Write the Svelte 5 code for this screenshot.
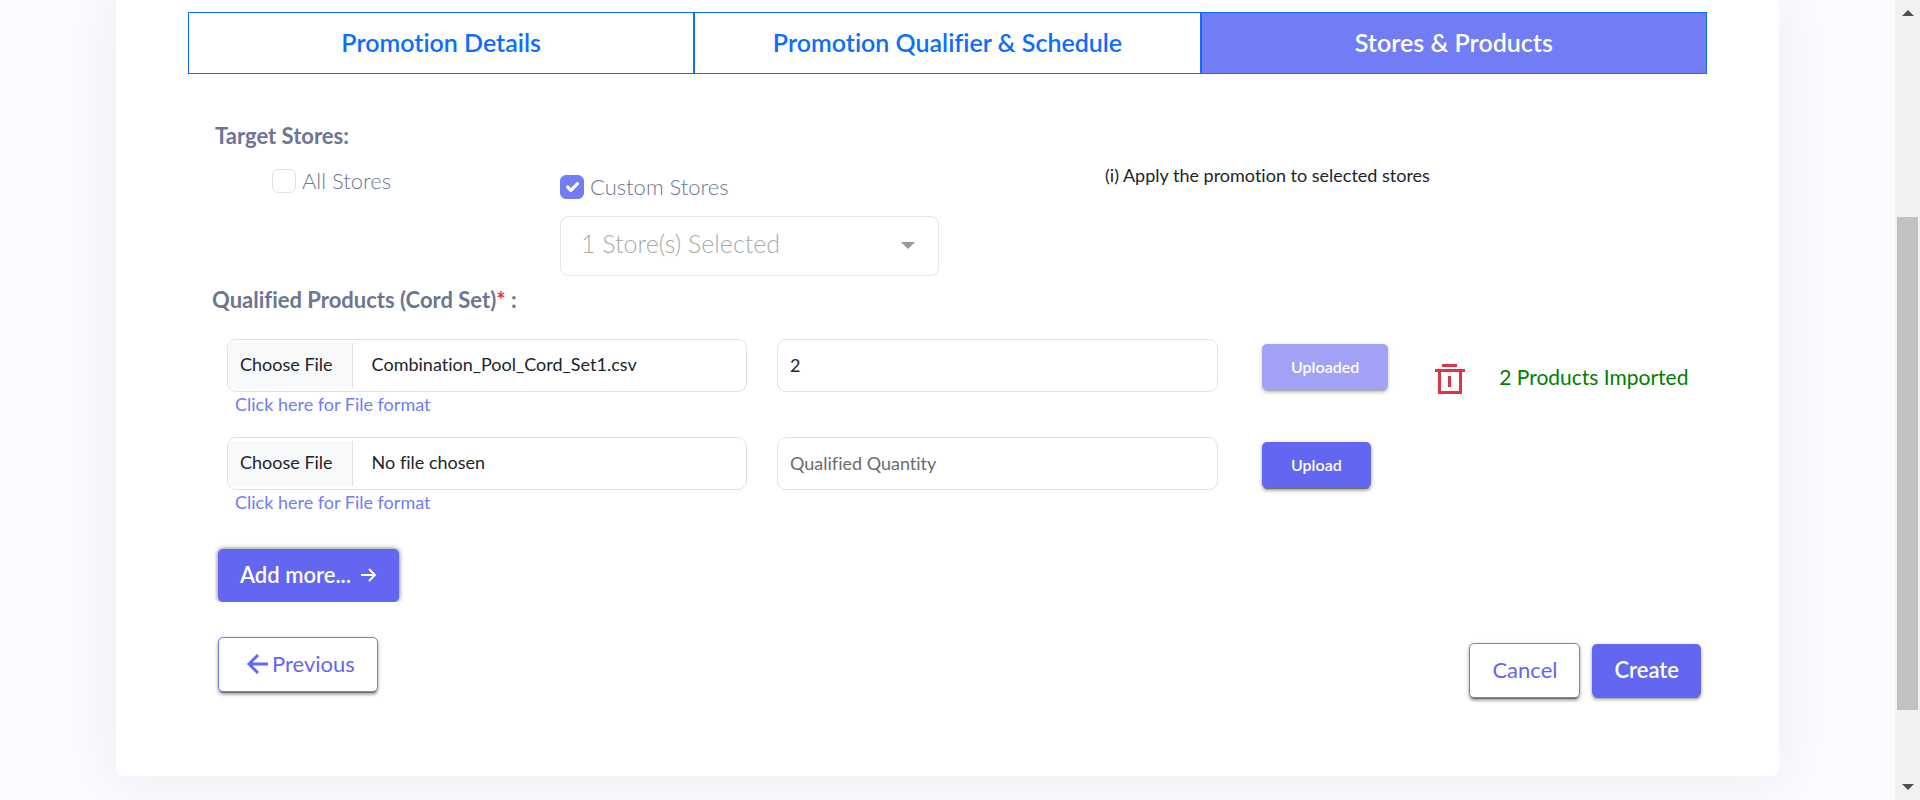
<script>
  import { onMount } from 'svelte';

  const tabs = ['Promotion Details', 'Promotion Qualifier & Schedule', 'Stores & Products'];
  const activeTab = 2;

  let allStores = $state(false);
  let customStores = $state(true);
  let rows = $state([
    { file: 'Combination_Pool_Cord_Set1.csv', quantity: '2', uploaded: true, imported: 2 },
    { file: '', quantity: '', uploaded: false, imported: 0 }
  ]);
  let fileInputs = $state([]);

  onMount(() => {
    rows.forEach((row, i) => {
      if (!row.file) return;
      const transfer = new DataTransfer();
      transfer.items.add(new File([''], row.file, { type: 'text/csv' }));
      fileInputs[i].files = transfer.files;
    });
  });

  function addRow() {
    rows.push({ file: '', quantity: '', uploaded: false, imported: 0 });
  }
</script>

<div class="page">
  <main>
    <section class="card">
      <nav class="tabs">
        {#each tabs as tab, i}
          <button type="button" class="tab" class:active={i === activeTab}>{tab}</button>
        {/each}
      </nav>

      <h2 class="heading">Target Stores:</h2>
      <div class="stores">
        <div class="all">
          <label class="check"><input type="checkbox" bind:checked={allStores} />All Stores</label>
        </div>
        <div class="custom">
          <label class="check"><input type="checkbox" bind:checked={customStores} />Custom Stores</label>
          <div class="select">
            <select aria-label="Stores">
              <option>1 Store(s) Selected</option>
            </select>
            <svg viewBox="0 0 14 7" width="14" height="7" aria-hidden="true"><path d="M0 0h14L7 7z" fill="#999" /></svg>
          </div>
        </div>
        <p class="hint">(i) Apply the promotion to selected stores</p>
      </div>

      <h2 class="heading products">Qualified Products (Cord Set)<span class="required">*</span> :</h2>
      {#each rows as row, i}
        <div class="row">
          <div class="file">
            <input type="file" accept=".csv" aria-label="Product file" bind:this={fileInputs[i]} />
            <a href="#format">Click here for File format</a>
          </div>
          <input class="quantity" type="text" placeholder="Qualified Quantity" aria-label="Qualified Quantity" bind:value={row.quantity} />
          <div class="actions">
            <button type="button" class="btn small" disabled={row.uploaded}>{row.uploaded ? 'Uploaded' : 'Upload'}</button>
            {#if row.uploaded}
              <button type="button" class="delete" aria-label="Delete">
                <svg viewBox="0 0 30 30" width="30" height="30" fill="#dc3545">
                  <path d="M7 0h15v3H7zM0 5h30v3h-3v22H3V8H0zM6 8v19h18V8zM13 12h3v11h-3z" fill-rule="evenodd" />
                </svg>
              </button>
              <span class="imported">{row.imported} Products Imported</span>
            {/if}
          </div>
        </div>
      {/each}

      <div class="add">
        <button type="button" class="btn" onclick={addRow}>
          Add more...
          <svg viewBox="0 0 16 16" width="16" height="16" fill="none" stroke="currentColor" stroke-width="2"><path d="M0 8h14M8 2l6 6-6 6" /></svg>
        </button>
      </div>

      <footer>
        <button type="button" class="btn outline previous">
          <svg viewBox="0 0 22 22" width="22" height="22" fill="none" stroke="currentColor" stroke-width="3"><path d="M22 11H3M12 2l-9 9 9 9" /></svg>
          Previous
        </button>
        <div class="finish">
          <button type="button" class="btn outline">Cancel</button>
          <button type="button" class="btn">Create</button>
        </div>
      </footer>
    </section>
  </main>

  <div class="scrollbar" aria-hidden="true">
    <svg viewBox="0 0 12 6" width="12" height="6"><path d="M6 0l6 6H0z" fill="#505050" /></svg>
    <div class="track"><div class="thumb"></div></div>
    <svg viewBox="0 0 12 6" width="12" height="6"><path d="M0 0h12L6 6z" fill="#505050" /></svg>
  </div>
</div>

<style>
  :global(body) {
    margin: 0;
  }

  .page,
  .page * {
    box-sizing: border-box;
  }

  .page {
    display: grid;
    grid-template-columns: minmax(0, 1fr) 25px;
    min-height: 100vh;
    background: #fafbff;
    color: #212529;
    font-family: Lato, 'Open Sans', sans-serif;
    font-size: 18px;
    font-variant-ligatures: none;
  }

  button,
  input,
  select {
    font: inherit;
    font-variant-ligatures: none;
  }

  main {
    padding: 0 116px 23px;
    overflow: hidden;
  }

  .card {
    padding: 12px 72px 78px;
    border-radius: 0 0 8px 8px;
    background: #fff;
    box-shadow: 0 0 50px rgba(33, 37, 60, 0.07);
  }

  .tabs {
    display: grid;
    grid-template-columns: repeat(3, 1fr);
  }

  .tab {
    height: 62px;
    padding: 0 0 2px;
    border: 1px solid #0d6efd;
    background: #fff;
    color: #0d6efd;
    font-size: 25px;
    font-weight: 600;
  }

  .tab.active {
    background: #727cf5;
    color: #fff;
  }

  .heading {
    margin: 46px 0 0 27px;
    color: #6c7693;
    font-size: 22px;
    font-weight: 700;
    line-height: 32px;
  }

  .stores {
    display: grid;
    grid-template-columns: 372fr 545fr 602fr;
    align-items: start;
    padding-top: 8px;
  }

  .all {
    padding: 6px 0 0 84px;
  }

  .custom {
    padding: 12px 166px 0 0;
  }

  .check {
    display: flex;
    align-items: center;
    gap: 6px;
    color: #6c7693;
    font-size: 22px;
    font-weight: 300;
    line-height: 30px;
  }

  .check input {
    width: 24px;
    height: 24px;
    margin: 0;
    border: 1px solid #dee2e6;
    border-radius: 6px;
    appearance: none;
    background: #fff;
  }

  .check input:checked {
    border-color: #727cf5;
    background: #727cf5 url("data:image/svg+xml,%3Csvg xmlns='http://www.w3.org/2000/svg' viewBox='0 0 20 20'%3E%3Cpath fill='none' stroke='%23fff' stroke-linecap='round' stroke-linejoin='round' stroke-width='3' d='m6 10 3 3 6-6'/%3E%3C/svg%3E") center / 22px no-repeat;
  }

  .select {
    position: relative;
    margin-top: 14px;
  }

  .select select {
    display: block;
    width: 100%;
    height: 60px;
    padding: 0 48px 6px 20px;
    border: 1px solid #e4e6e8;
    border-radius: 8px;
    appearance: none;
    background: #fff;
    color: #aaa;
    font-size: 25px;
    font-weight: 300;
  }

  .select svg {
    position: absolute;
    top: 26px;
    right: 24px;
    pointer-events: none;
  }

  .hint {
    margin: 0;
    padding-top: 4px;
    line-height: 22px;
  }

  .heading.products {
    margin: 8px 0 23px 24px;
  }

  .required {
    color: #dc3545;
  }

  .row {
    display: grid;
    grid-template-columns: 520fr 441fr 459fr;
    gap: 30px;
    align-items: start;
    margin-left: 39px;
    min-height: 98px;
  }

  .file input,
  .quantity {
    display: block;
    width: 100%;
    height: 53px;
    border: 1px solid #dee2e6;
    border-radius: 9px;
    background: #fff;
    color: #212529;
  }

  .file input {
    padding: 3px 0;
    line-height: 43px;
  }

  .file input::file-selector-button {
    height: 45px;
    margin: 0 19px 0 0;
    padding: 0 19px 2px 12px;
    border: 0;
    border-right: 1px solid #dee2e6;
    background: #f8f9fb;
    color: #212529;
    font: inherit;
  }

  .file a {
    display: block;
    margin-left: 8px;
    color: #727cf5;
    line-height: 24px;
    text-decoration: none;
  }

  .quantity {
    padding: 0 12px 2px;
  }

  .quantity::placeholder {
    color: #6c6c6c;
    opacity: 1;
  }

  .actions {
    display: flex;
    align-items: flex-start;
    padding: 5px 0 0 14px;
  }

  .btn {
    display: flex;
    align-items: center;
    height: 53px;
    padding: 0 22px 2px;
    border: 0;
    border-radius: 5px;
    background: #6366f1;
    box-shadow: 0 3px 1px -2px rgba(0, 0, 0, 0.4), 0 3px 3px rgba(0, 0, 0, 0.24), 0 1px 5px rgba(0, 0, 0, 0.18);
    color: #fff;
    font-size: 22px;
    font-weight: 600;
  }

  .btn.small {
    height: 46px;
    padding: 0 29px 2px;
    font-size: 16px;
  }

  .btn:disabled {
    opacity: 0.6;
  }

  .btn.outline {
    height: 55px;
    border: 1px solid #727cf5;
    background: #fff;
    color: #6366f1;
    font-weight: 400;
  }

  .delete {
    display: flex;
    margin: 20px 34px 0 47px;
    padding: 0;
    border: 0;
    background: none;
  }

  .imported {
    padding-top: 20px;
    color: #008000;
    font-size: 21px;
    line-height: 26px;
    white-space: nowrap;
  }

  .add {
    margin-left: 27px;
    padding: 14px 3px 0;
    overflow: hidden;
  }

  .add .btn {
    gap: 10px;
    box-shadow: 0 0 5px rgba(0, 0, 0, 0.6);
  }

  footer {
    display: flex;
    align-items: flex-start;
    justify-content: space-between;
    padding: 35px 6px 0 30px;
  }

  .btn.previous {
    gap: 4px;
    padding-left: 27px;
  }

  .finish {
    display: flex;
    align-items: center;
    gap: 12px;
    padding-top: 6px;
  }

  .scrollbar {
    display: flex;
    flex-direction: column;
    align-items: center;
    padding: 10px 2px;
    background: #f1f1f1;
  }

  .track {
    display: grid;
    flex: 1;
    grid-template-rows: 201fr 493fr 74fr;
    width: 100%;
  }

  .thumb {
    grid-row: 2;
    background: #c1c1c1;
  }
</style>
